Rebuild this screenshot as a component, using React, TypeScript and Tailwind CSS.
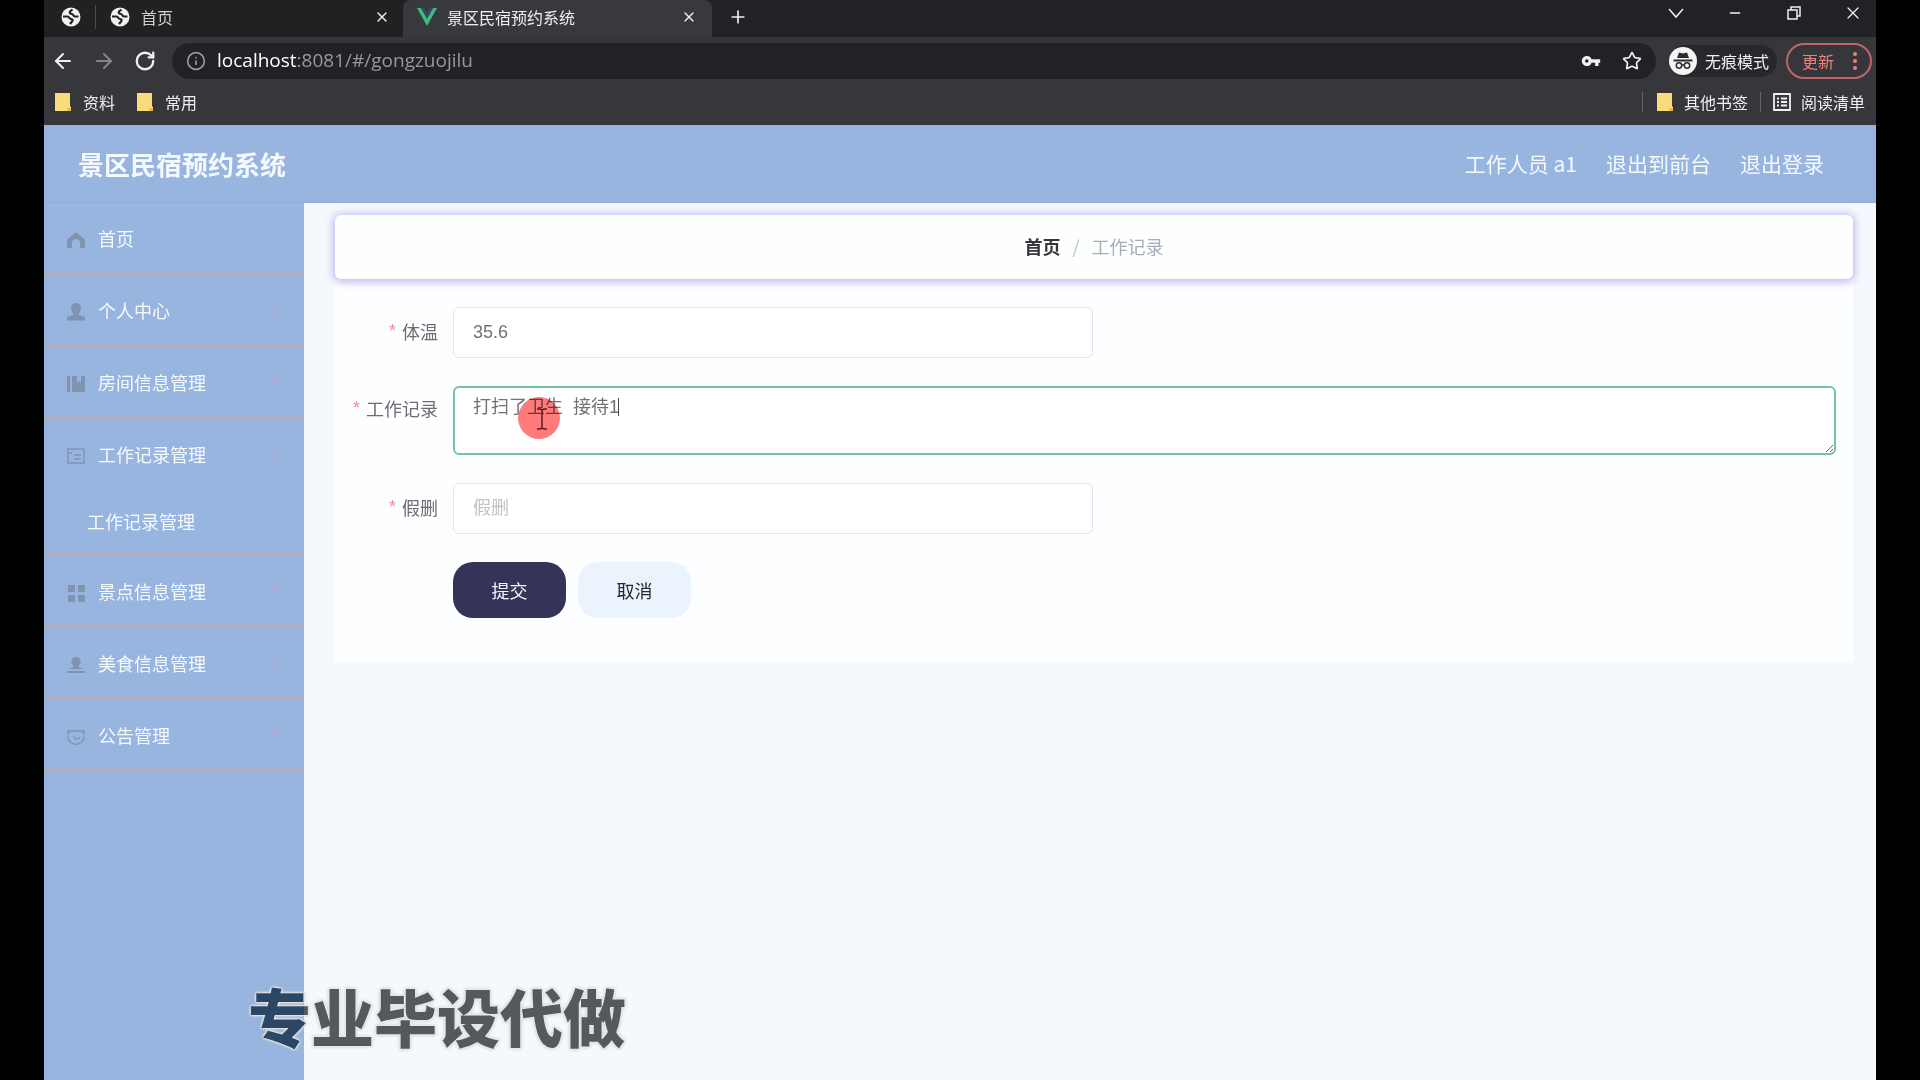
import React, { useState } from 'react';
import { ArrowLeft, ArrowRight, Info, Minus, Plus, RotateCw, Star, X } from 'lucide-react';
import { MdVpnKey } from 'react-icons/md';

type IconName = 'home' | 'user' | 'book' | 'card' | 'grid' | 'seat' | 'clock';

interface MenuItem {
  label: string;
  icon: IconName;
  arrow: boolean;
  children?: string[];
}

const menu: MenuItem[] = [
  { label: '首页', icon: 'home', arrow: false },
  { label: '个人中心', icon: 'user', arrow: true },
  { label: '房间信息管理', icon: 'book', arrow: true },
  { label: '工作记录管理', icon: 'card', arrow: true, children: ['工作记录管理'] },
  { label: '景点信息管理', icon: 'grid', arrow: true },
  { label: '美食信息管理', icon: 'seat', arrow: true },
  { label: '公告管理', icon: 'clock', arrow: true },
];

const MenuIcon: React.FC<{ name: IconName }> = ({ name }) => (
  <svg viewBox="0 0 20 20" className="h-5 w-5 shrink-0 text-[#8093b1]" fill="currentColor" aria-hidden="true">
    {name === 'home' && <path d="M10 2 1 10v8h5v-5a4 4 0 0 1 8 0v5h5v-8z" />}
    {name === 'user' && <path d="M10 1a5 5 0 0 0-5 5c0 3 2 6 3 6.500L1 15v3.500h18V15l-7-2.500c1-.5 3-3.500 3-6.500a5 5 0 0 0-5-5z" />}
    {name === 'book' && <path d="M1 2h3v16H1zM6 2h5v7l2-2 2 2V2h4v16H6z" />}
    {name === 'card' && (
      <path fill="none" stroke="currentColor" strokeWidth="1.500" d="M2 3h16v14H2zM2 7h4m2 2h7M8 13h7" />
    )}
    {name === 'grid' && <path d="M2 2h7v7H2zM12 2h7v7h-7zM2 12h7v7H2zM12 12h7v7h-7z" />}
    {name === 'seat' && <path d="M10 2a4.500 4.500 0 0 0-3 8l1 1.500L3 14h14l-5-2.500 1-1.500a4.500 4.500 0 0 0-3-8zM1 16h18v2H1z" />}
    {name === 'clock' && (
      <path fill="none" stroke="currentColor" strokeWidth="1.300" d="M3 3 1 6m16-3 2 3M4 4h12a8 8 0 1 1-12 0zM7 9l3 3 4-1" />
    )}
  </svg>
);

const Globe = () => (
  <svg viewBox="0 0 20 20" className="h-5 w-5 shrink-0" aria-hidden="true">
    <circle cx="10" cy="10" r="9.500" fill="#f1f1f1" />
    <path
      d="M2 9.500h4.500c2 0 1.500 2.500 3.500 2.500s2 1.500 1 2.500l-2 2.500M11.500 2.500 9 4.500c-1 1.500.5 2.500 2 2.500s1 2.500 3 2.500h3.500"
      fill="none"
      stroke="#202124"
      strokeWidth="2.200"
    />
  </svg>
);

const VueLogo = () => (
  <svg viewBox="0 0 20 18" className="h-[18px] w-5 shrink-0" aria-hidden="true">
    <path d="M0 0h4l6 10.500L16 0h4L10 18z" fill="#41b883" />
    <path d="M4 0h3.500L10 4.500 12.500 0H16l-6 10.500z" fill="#35495e" />
  </svg>
);

const Folder = () => (
  <svg viewBox="0 0 16 18" className="h-[18px] w-4 shrink-0" aria-hidden="true">
    <path d="M0 0h15v13l1 1v4H0z" fill="#fbdc7c" />
    <path d="M12 15h4v3h-4z" fill="#e9bd4a" />
  </svg>
);

const Incognito = () => (
  <svg viewBox="0 0 28 28" className="h-7 w-7 shrink-0" aria-hidden="true">
    <circle cx="14" cy="14" r="14" fill="#f4f4f4" />
    <path d="M10 5.500 14 6.500 18 5.500 20 11H8zM4.500 12.500h19v2h-19z" fill="#2b2c30" />
    <g fill="none" stroke="#2b2c30" strokeWidth="1.500">
      <circle cx="10" cy="18.500" r="2.700" />
      <circle cx="18" cy="18.500" r="2.700" />
      <path d="M12.700 18h2.600" />
    </g>
  </svg>
);

const BrowserChrome = () => (
  <div className="bg-[#37373b] text-[16px] text-[#f0f0f0]">
    {/* Tab strip */}
    <div className="flex h-[37px] items-stretch bg-[#202225]">
      <div className="flex w-[359px] items-center bg-[#212121] pr-[13px] pb-1 pl-[17px]">
        <Globe />
        <span className="mx-[14px] h-6 w-px bg-[#4b4b4b]" />
        <Globe />
        <span className="ml-[11px] flex-1 text-[#d0d0d0]">首页</span>
        <button type="button" aria-label="关闭标签页">
          <X className="h-4 w-4" />
        </button>
      </div>
      <div className="flex w-[309px] items-center rounded-t-lg bg-[#37393c] pr-[15px] pb-1 pl-[14px]">
        <VueLogo />
        <span className="ml-[10px] flex-1">景区民宿预约系统</span>
        <button type="button" aria-label="关闭标签页">
          <X className="h-4 w-4" />
        </button>
      </div>
      <button type="button" aria-label="新标签页" className="ml-4 pb-1">
        <Plus className="h-5 w-5" />
      </button>
      <div className="ml-auto flex items-center gap-[43px] pr-[15px] pb-[11px]">
        <svg viewBox="0 0 16 16" className="h-4 w-4" fill="none" stroke="currentColor" strokeWidth="1.500" aria-hidden="true">
          <path d="m1 4 7 8 7-8" />
        </svg>
        <Minus className="h-4 w-4" strokeWidth={2} />
        <svg viewBox="0 0 16 16" className="h-4 w-4" fill="none" stroke="currentColor" strokeWidth="1.500" aria-hidden="true">
          <path d="M2 5h9v9H2zM5 5V2h9v9h-3" />
        </svg>
        <X className="h-4 w-4 scale-125" strokeWidth={1.5} />
      </div>
    </div>

    {/* Toolbar */}
    <div className="flex h-12 items-center pr-1 pb-px pl-[7px]">
      <button type="button" aria-label="后退">
        <ArrowLeft className="h-6 w-6" />
      </button>
      <button type="button" aria-label="前进" className="ml-[17px] text-[#858588]">
        <ArrowRight className="h-6 w-6" />
      </button>
      <button type="button" aria-label="刷新" className="ml-[18px]">
        <RotateCw className="h-[22px] w-[22px]" strokeWidth={2.5} />
      </button>
      <div className="ml-4 flex h-9 flex-1 items-center rounded-full bg-[#222226] pr-[14px] pl-[14px]">
        <Info className="h-5 w-5 text-[#9a9a9c]" />
        <span className="ml-[11px] flex-1 font-['Open_Sans',sans-serif] text-[19px] text-[#98989b]">
          <span className="text-white">localhost</span>:8081/#/gongzuojilu
        </span>
        <MdVpnKey className="h-5 w-5" />
        <Star className="ml-[21px] h-5 w-5" />
      </div>
      <div className="ml-[13px] flex h-8 items-center rounded-full bg-[#26282b] pr-2">
        <Incognito />
        <span className="ml-2">无痕模式</span>
      </div>
      <button
        type="button"
        className="ml-[9px] flex h-9 w-[86px] items-center justify-between rounded-full border-2 border-[#c2646e] pr-[13px] pl-[14px] text-[#f0807c]"
      >
        更新
        <svg viewBox="0 0 4 18" className="h-[18px] w-1" fill="currentColor" aria-hidden="true">
          <circle cx="2" cy="2" r="2" />
          <circle cx="2" cy="9" r="2" />
          <circle cx="2" cy="16" r="2" />
        </svg>
      </button>
    </div>

    {/* Bookmarks */}
    <div className="flex h-10 items-center pr-[11px] pb-[6px] pl-[11px]">
      <Folder />
      <a href="#ziliao" className="ml-3">资料</a>
      <span className="ml-[22px]"><Folder /></span>
      <a href="#changyong" className="ml-3">常用</a>
      <span className="ml-auto h-5 w-px bg-[#66666a]" />
      <span className="ml-[14px]"><Folder /></span>
      <a href="#other" className="ml-[11px]">其他书签</a>
      <span className="mx-3 h-5 w-px bg-[#66666a]" />
      <svg viewBox="0 0 18 18" className="h-[18px] w-[18px]" fill="none" stroke="currentColor" strokeWidth="1.800" aria-hidden="true">
        <path d="M1 1h16v16H1zM4 5.500h2m2 0h6M4 9h2m2 0h6M4 12.500h2m2 0h6" />
      </svg>
      <a href="#reading" className="ml-[10px]">阅读清单</a>
    </div>
  </div>
);

const Sidebar = () => (
  <nav className="w-[260px] shrink-0 bg-[#98b5e0] text-[18px] text-[#f4faff]">
    <ul>
      {menu.map((item) => (
        <li key={item.label} className="border-b-2 border-[#c3ab9f]">
          <a href="#menu" className="flex h-[70px] items-center pr-[25px] pl-2">
            <span className="mt-1 ml-[14px]">
              <MenuIcon name={item.icon} />
            </span>
            <span className="ml-3 flex-1">{item.label}</span>
            {item.arrow && (
              <svg viewBox="0 0 10 5" className="mb-1 h-[5px] w-[10px]" fill="none" stroke="#bfa4d4" strokeWidth="1.500" aria-hidden="true">
                <path d={item.children ? 'M1 4 5 1l4 3' : 'M1 1l4 3 4-3'} />
              </svg>
            )}
          </a>
          {item.children?.map((child) => (
            <a key={child} href="#/gongzuojilu" className="flex h-[65px] items-center pl-[43px]">
              {child}
            </a>
          ))}
        </li>
      ))}
    </ul>
  </nav>
);

const FieldLabel: React.FC<{ htmlFor: string; tall?: boolean; children: React.ReactNode }> = ({ htmlFor, tall, children }) => (
  <label
    htmlFor={htmlFor}
    className={`flex w-[118px] shrink-0 items-center justify-end pr-[15px] ${tall ? 'h-11' : 'h-12'}`}
  >
    <span className="mr-[6px] font-['Liberation_Sans',sans-serif] text-[#f78a98]">*</span>
    {children}
  </label>
);

const RecordForm = () => {
  const [temperature, setTemperature] = useState('35.6');
  const [record, setRecord] = useState('打扫了卫生  接待1');
  const [deleted, setDeleted] = useState('');

  const inputClass =
    "h-[51px] w-[640px] max-w-full rounded-md border border-[#e4e2ea] bg-white px-[19px] font-['Liberation_Sans','Noto_Sans_CJK_SC',sans-serif] text-[#707276] outline-none placeholder:text-[#c3c1c6]";

  return (
    <form
      className="flex flex-col gap-7 bg-[#fdfeff] pt-7 pr-[17px] pb-11 text-[18px] text-[#6b6d70]"
      onSubmit={(e) => e.preventDefault()}
    >
      <div className="flex">
        <FieldLabel htmlFor="temperature">体温</FieldLabel>
        <input id="temperature" className={inputClass} value={temperature} onChange={(e) => setTemperature(e.target.value)} />
      </div>
      <div className="flex">
        <FieldLabel htmlFor="record" tall>工作记录</FieldLabel>
        <div className="relative flex-1">
          <textarea
            id="record"
            className="block h-[69px] w-full rounded-md border-2 border-[#74c3a6] bg-white px-[18px] py-[6px] font-['Liberation_Sans','Noto_Sans_CJK_SC',sans-serif] leading-[27px] text-[#707276] outline-none"
            value={record}
            onChange={(e) => setRecord(e.target.value)}
          />
          {/* Text caret */}
          <span className="absolute top-3 left-[165px] h-[18px] w-px bg-[#444]" />
          {/* Mouse highlight */}
          <span className="absolute top-[11px] left-[65px] h-[42px] w-[42px] rounded-full bg-[#ff7b7b] mix-blend-multiply" />
          <svg viewBox="0 0 10 22" className="absolute top-[22px] left-[84px] h-[22px] w-[10px]" fill="none" stroke="#5c1c1c" strokeWidth="1.500" aria-hidden="true">
            <path d="M0 1h3l2 1 2-1h3M0 21h3l2-1 2 1h3M5 2v18" />
          </svg>
        </div>
      </div>
      <div className="flex">
        <FieldLabel htmlFor="deleted">假删</FieldLabel>
        <input id="deleted" className={inputClass} placeholder="假删" value={deleted} onChange={(e) => setDeleted(e.target.value)} />
      </div>
      <div className="flex gap-3 pl-[118px]">
        <button type="submit" className="h-14 w-[113px] rounded-[20px] bg-[#363358] text-[#f5f5ff]">
          提交
        </button>
        <button type="button" className="h-14 w-[113px] rounded-[20px] bg-[#ebf4fd] text-[#26292d]">
          取消
        </button>
      </div>
    </form>
  );
};

export default function App() {
  return (
    <div className="min-h-screen bg-black px-11 font-['Noto_Sans_CJK_SC',sans-serif]">
      <div className="relative flex min-h-screen flex-col overflow-hidden">
        <BrowserChrome />
        <header className="flex h-[78px] items-center justify-between border-b border-[#91abd8] bg-[#98b5e0] pr-[52px] pl-[34px] text-[#f4f9ff]">
          <h1 className="text-[26px] font-bold">景区民宿预约系统</h1>
          <div className="flex gap-[29px] text-[21px]">
            <span>工作人员 a1</span>
            <a href="#front">退出到前台</a>
            <a href="#logout">退出登录</a>
          </div>
        </header>
        <div className="flex flex-1">
          <Sidebar />
          <main className="min-w-0 flex-1 bg-[#f5f9fd] pt-3 pr-[23px] pl-[31px]">
            <div className="relative flex h-16 items-center justify-center gap-3 rounded-md bg-[#fdffff] pb-[2px] text-[18px] shadow-[0_1px_9px_2px_#c0b8f2]">
              <a href="#home" className="font-bold text-[#34363a]">首页</a>
              <span className="text-[#b9bec2]">/</span>
              <span className="text-[#a9abb8]">工作记录</span>
            </div>
            <RecordForm />
          </main>
        </div>
        <div className="absolute bottom-[18px] left-[204px] bg-[linear-gradient(90deg,#2c4666_56px,#55595b_56px)] bg-clip-text text-[63px] leading-[94px] font-black text-transparent [filter:drop-shadow(0_0_1px_#fff)_drop-shadow(0_0_1px_#e8e8e8)_drop-shadow(0_0_1px_#bbb)]">
          专业毕设代做
        </div>
      </div>
    </div>
  );
}
